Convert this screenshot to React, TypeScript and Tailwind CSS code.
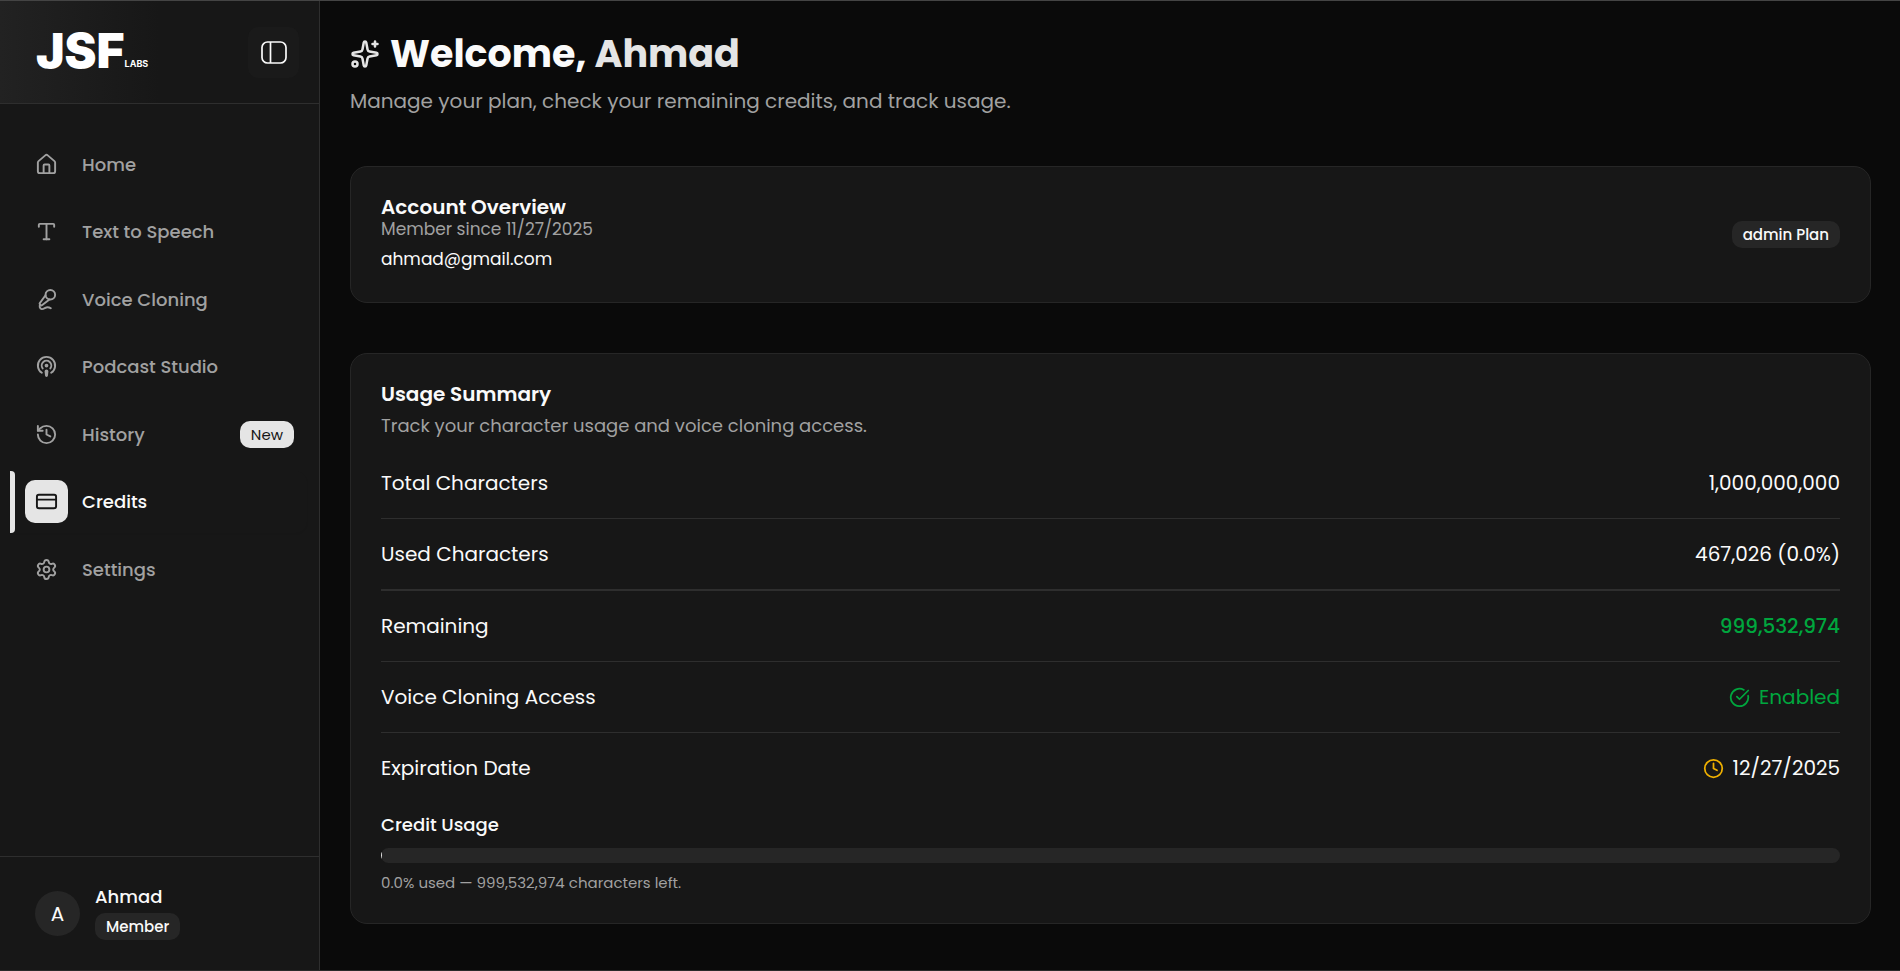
import { CircleCheckBig, Clock, CreditCard, History, MicVocal, Podcast, Settings, Sparkles, Type, House, type LucideIcon } from "lucide-react";
import clsx from "clsx";

interface NavItem {
  label: string;
  icon: LucideIcon;
  badge?: string;
  active?: boolean;
}

const navItems: NavItem[] = [
  { label: "Home", icon: House },
  { label: "Text to Speech", icon: Type },
  { label: "Voice Cloning", icon: MicVocal },
  { label: "Podcast Studio", icon: Podcast },
  { label: "History", icon: History, badge: "New" },
  { label: "Credits", icon: CreditCard, active: true },
  { label: "Settings", icon: Settings },
];

const usage = { total: 1000000000, used: 467026 };
const remaining = usage.total - usage.used;
const percent = (usage.used / usage.total) * 100;
const format = (n: number) => n.toLocaleString("en-US");

export default function App() {
  return (
    <div className="flex min-h-screen border-y border-t-[#444444] border-b-[#2a2a2a] bg-[#0a0a0a] font-['Poppins','Inter',sans-serif] text-[#fafafa]">
      <Sidebar />
      <main className="flex-1 pt-[31px] pr-[29px] pb-[30px] pl-[30px]">
        <h1 className="flex items-center gap-[10px] text-[38px] leading-[44px] font-bold">
          <Sparkles className="size-[30px] text-[#e5e5e5]" />
          <span>
            Welcome, <span className="text-[#e5e5e5]">Ahmad</span>
          </span>
        </h1>
        <p className="mt-[10px] text-[20px] leading-[30px] text-[#a1a1a1]">
          Manage your plan, check your remaining credits, and track usage.
        </p>
        <AccountCard />
        <UsageCard />
      </main>
    </div>
  );
}

function Sidebar() {
  return (
    <aside className="flex w-[320px] shrink-0 flex-col border-r border-[#2e2e2e] bg-[#171717]">
      <div className="flex h-[103px] items-center justify-between border-b border-[#2e2e2e] bg-linear-to-r from-[#222222] to-[#171717] to-50% pr-5 pl-9">
        <Logo />
        <button type="button" aria-label="Toggle sidebar" className="flex size-[51px] items-center justify-center rounded-[10px] bg-[#1a1a1a]">
          <svg viewBox="0 0 26 23" className="h-[23px] w-[26px]" fill="none" stroke="currentColor" strokeWidth="1.7">
            <rect x="1" y="1" width="24" height="21" rx="5.5" />
            <path d="M9.5 1v21" />
          </svg>
        </button>
      </div>

      <nav className="mt-[29px] flex-1 pr-3 pl-[10px]">
        <ul className="flex h-[467px] flex-col justify-between">
          {navItems.map((item) => (
            <NavLink key={item.label} {...item} />
          ))}
        </ul>
      </nav>

      <div className="flex h-[114px] items-center gap-[15px] border-t border-[#2e2e2e] px-[35px]">
        <span className="flex size-[45px] items-center justify-center rounded-full bg-[#262626] text-[20px]">A</span>
        <div className="flex flex-col items-start gap-1 pb-1">
          <p className="text-[18px] leading-[25px] font-medium">Ahmad</p>
          <Badge>Member</Badge>
        </div>
      </div>
    </aside>
  );
}

function NavLink({ label, icon: Icon, badge, active }: NavItem) {
  return (
    <li>
      <a
        href="#"
        className={clsx(
          "flex h-[62px] items-center rounded-r-[12px] pr-[13px] text-[18px] font-medium",
          active ? "shadow-xs" : "text-[#a1a1a1]"
        )}
      >
        <span className={clsx("h-full w-[5px] rounded-r-[4px]", active && "bg-[#e5e5e5]")} />
        <span className={clsx("mx-[10px] flex size-[43px] items-center justify-center rounded-[10px]", active && "bg-[#e5e5e5] text-[#171717]")}>
          <Icon className="size-[23px]" />
        </span>
        <span className="ml-1">{label}</span>
        {badge && (
          <span className="ml-auto rounded-[10px] bg-[#e5e5e5] px-[11px] text-[15px] leading-[27px] font-normal text-[#171717]">{badge}</span>
        )}
      </a>
    </li>
  );
}

function Logo() {
  return (
    <div className="flex items-end pb-[2px] font-['Inter',sans-serif] leading-[36px] font-black text-white">
      <span className="text-[48px]">JSF</span>
      <span className="text-[9px] leading-[11px] font-bold">LABS</span>
    </div>
  );
}

function Badge({ children }: { children: React.ReactNode }) {
  return (
    <span className="inline-block rounded-[10px] bg-[#262626] px-[11px] text-[15px] leading-[27px] font-medium">{children}</span>
  );
}

function AccountCard() {
  return (
    <section className="mt-[50px] flex items-center justify-between rounded-[17px] border border-[#262626] bg-[#171717] px-[30px] py-[29px]">
      <div>
        <h2 className="text-[20px] leading-[22px] font-semibold">Account Overview</h2>
        <p className="text-[17px] leading-[22px] text-[#a1a1a1]">Member since 11/27/2025</p>
        <p className="mt-[5px] text-[17px] leading-[28px]">ahmad@gmail.com</p>
      </div>
      <Badge>admin Plan</Badge>
    </section>
  );
}

function UsageCard() {
  return (
    <section className="mt-[50px] rounded-[17px] border border-[#262626] bg-[#171717] px-[30px] pt-[29px] pb-[30px]">
      <h2 className="text-[20px] leading-[22px] font-semibold">Usage Summary</h2>
      <p className="mt-[8px] text-[18px] leading-[26px] text-[#a1a1a1]">Track your character usage and voice cloning access.</p>
      <dl className="mt-[9px] text-[20px]">
        <Row label="Total Characters">{format(usage.total)}</Row>
        <Row label="Used Characters" className="border-b-2">
          {format(usage.used)} ({percent.toFixed(1)}%)
        </Row>
        <Row label="Remaining" valueClass="font-medium text-[#00a63e]">
          {format(remaining)}
        </Row>
        <Row label="Voice Cloning Access" valueClass="text-[#00a63e]">
          <CircleCheckBig className="size-[21px]" />
          Enabled
        </Row>
        <Row label="Expiration Date" className="border-b-0">
          <Clock className="size-[21px] text-[#f0b100]" />
          12/27/2025
        </Row>
      </dl>

      <h3 id="credit-usage" className="mt-[9px] text-[18px] leading-[26px] font-medium">
        Credit Usage
      </h3>
      <div
        role="progressbar"
        aria-labelledby="credit-usage"
        aria-valuenow={percent}
        className="mt-[10px] h-[15px] overflow-hidden rounded-full bg-[#262626]"
      >
        <div className="h-full min-w-px bg-[#e5e5e5]" style={{ width: `${percent}%` }} />
      </div>
      <p className="mt-[10px] text-[15px] leading-[20px] text-[#a1a1a1]">
        {percent.toFixed(1)}% used — {format(remaining)} characters left.
      </p>
    </section>
  );
}

interface RowProps {
  label: string;
  children: React.ReactNode;
  className?: string;
  valueClass?: string;
}

function Row({ label, children, className = "border-b", valueClass }: RowProps) {
  return (
    <div className={clsx("flex items-center justify-between border-[#2e2e2e] py-5 leading-[30px]", className)}>
      <dt>{label}</dt>
      <dd className={clsx("flex items-center gap-[9px]", valueClass)}>{children}</dd>
    </div>
  );
}
